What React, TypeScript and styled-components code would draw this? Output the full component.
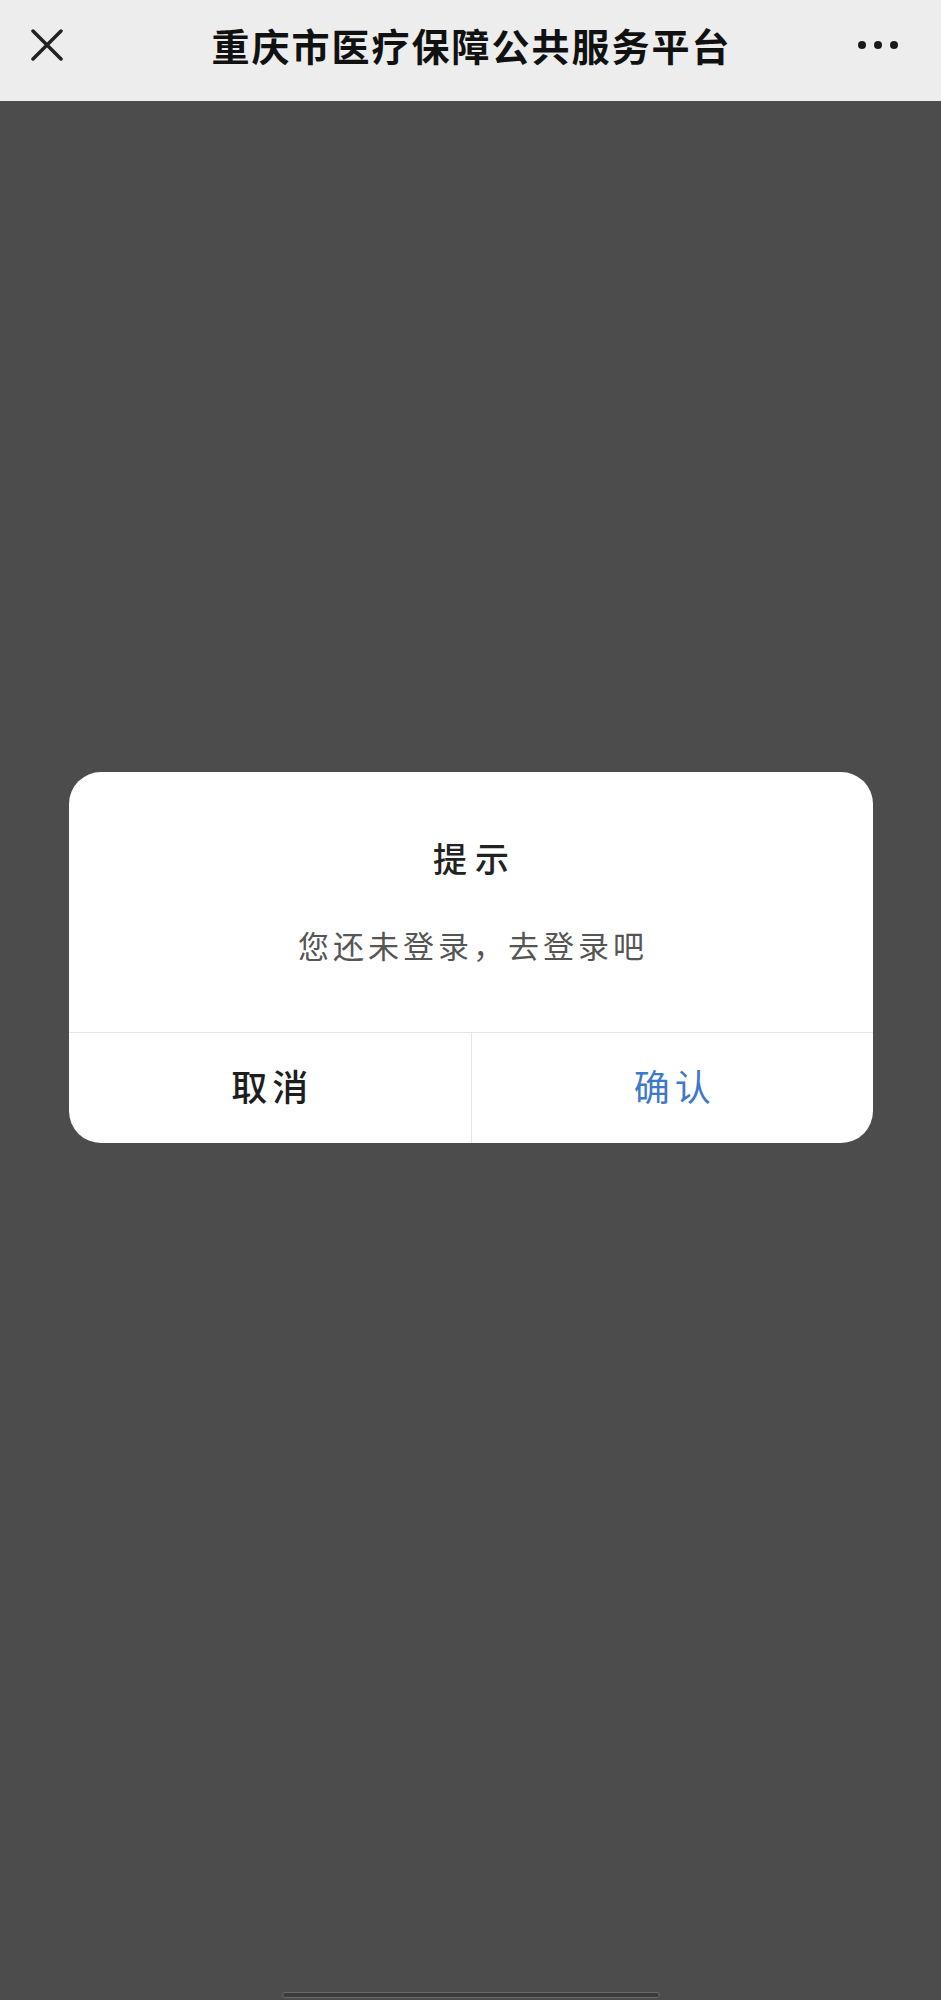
import styled, { createGlobalStyle } from 'styled-components';

const GlobalStyle = createGlobalStyle`
  html, body {
    margin: 0;
    padding: 0;
    background-color: #4c4c4c;
  }

  body {
    font-family: "Noto Sans CJK SC", "Noto Sans", sans-serif;
  }

  * {
    box-sizing: border-box;
  }
`;

const Page = styled.div`
  display: flex;
  flex-direction: column;
  min-height: 100vh;
  background-color: #4c4c4c;
`;

const NavBar = styled.header`
  display: grid;
  grid-template-columns: 128px 1fr 128px;
  align-items: center;
  height: 101px;
  padding-bottom: 12px;
  background-color: #ededed;
`;

const CloseButton = styled.button`
  justify-self: start;
  display: flex;
  align-items: center;
  justify-content: center;
  width: 32px;
  height: 32px;
  margin-left: 31px;
  padding: 0;
  border: none;
  background: none;
  color: #222;
`;

const Title = styled.h1`
  margin: 0;
  padding-left: 2px;
  text-align: center;
  font-size: 38px;
  line-height: 44px;
  font-weight: 700;
  letter-spacing: 2px;
  color: #111;
  white-space: nowrap;
`;

const MoreButton = styled.button`
  justify-self: end;
  display: flex;
  align-items: center;
  gap: 8px;
  margin-right: 43px;
  padding: 0;
  border: none;
  background: none;
`;

const Dot = styled.span`
  width: 8px;
  height: 8px;
  border-radius: 50%;
  background-color: #1a1a1a;
`;

const Main = styled.main`
  flex: 1;
  padding: 671px 68px 0 69px;
`;

const Dialog = styled.div`
  width: 804px;
  overflow: hidden;
  background-color: #fff;
  border-radius: 32px;
`;

const DialogBody = styled.div`
  display: flex;
  flex-direction: column;
  align-items: center;
  gap: 47px;
  padding: 66px 24px 67px;
`;

const DialogTitle = styled.h2`
  margin: 0;
  padding-left: 8px;
  font-size: 34px;
  line-height: 40px;
  font-weight: 500;
  letter-spacing: 8px;
  color: #222;
`;

const DialogMessage = styled.p`
  margin: 0;
  padding-left: 4px;
  font-size: 31px;
  line-height: 40px;
  font-weight: 400;
  letter-spacing: 4px;
  color: #555;
`;

const DialogFooter = styled.div`
  display: flex;
  height: 111px;
  border-top: 1px solid #e6e6e6;
`;

const DialogButton = styled.button<{ $primary?: boolean }>`
  flex: 1;
  display: flex;
  align-items: center;
  justify-content: center;
  padding: 0 0 6px 5px;
  border: none;
  background: none;
  font-family: inherit;
  font-size: 36px;
  font-weight: ${props => (props.$primary ? 400 : 500)};
  letter-spacing: 5px;
  color: ${props => (props.$primary ? '#3d79c8' : '#1e1e1e')};

  & + & {
    border-left: 1px solid #e6e6e6;
  }
`;

const HomeBarArea = styled.div`
  display: flex;
  justify-content: center;
  padding: 0 0 2px;
`;

const HomeBar = styled.div`
  width: 378px;
  height: 6px;
  margin-left: 1px;
  border-radius: 3px;
  background-color: #3c3c3c;
  border: 1px solid #6a6a6a;
`;

export default function App() {
  return (
    <>
      <GlobalStyle />
      <Page>
        <NavBar>
          <CloseButton aria-label="关闭">
            <svg width="32" height="32" viewBox="0 0 32 32" fill="none">
              <path d="M2 2L30 30M30 2L2 30" stroke="currentColor" strokeWidth="3.5" strokeLinecap="round" />
            </svg>
          </CloseButton>
          <Title>重庆市医疗保障公共服务平台</Title>
          <MoreButton aria-label="更多">
            <Dot />
            <Dot />
            <Dot />
          </MoreButton>
        </NavBar>
        <Main>
          <Dialog>
            <DialogBody>
              <DialogTitle>提示</DialogTitle>
              <DialogMessage>您还未登录，去登录吧</DialogMessage>
            </DialogBody>
            <DialogFooter>
              <DialogButton>取消</DialogButton>
              <DialogButton $primary>确认</DialogButton>
            </DialogFooter>
          </Dialog>
        </Main>
        <HomeBarArea>
          <HomeBar />
        </HomeBarArea>
      </Page>
    </>
  );
}
